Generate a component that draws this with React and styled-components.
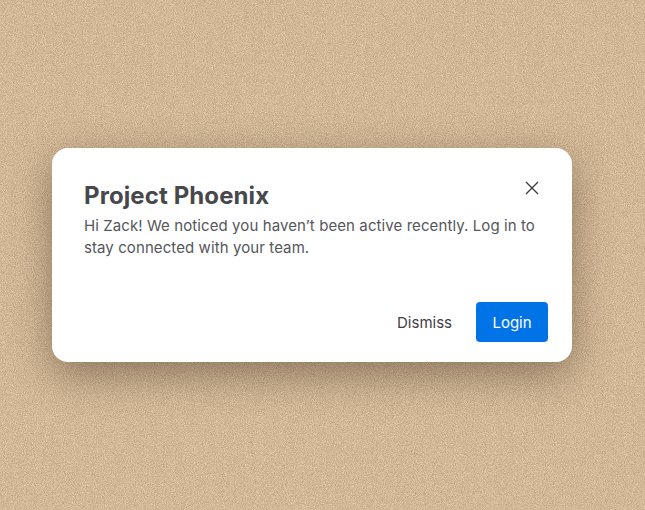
import { createGlobalStyle, styled } from "styled-components";

const noise = `url("data:image/svg+xml,%3Csvg xmlns='http://www.w3.org/2000/svg' width='645' height='510'%3E%3Cfilter id='n' x='0' y='0' width='100%25' height='100%25' color-interpolation-filters='sRGB'%3E%3CfeTurbulence type='fractalNoise' baseFrequency='1.1' numOctaves='2' seed='4'/%3E%3CfeColorMatrix values='0.28 0 0 0 0.683 0.28 0 0 0 0.581 0.28 0 0 0 0.452 0 0 0 0 1'/%3E%3C/filter%3E%3Crect width='645' height='510' filter='url(%23n)'/%3E%3C/svg%3E")`;

const GlobalStyle = createGlobalStyle`
    html, body {
        margin: 0;
        padding: 0;
    }
`;

const Page = styled.div`
    display: flex;
    align-items: center;
    box-sizing: border-box;
    width: 645px;
    height: 510px;
    padding-left: 52px;
    overflow: hidden;
    background-color: #d3b998;
    background-image: ${noise};
    font-family: "Inter", "Liberation Sans", sans-serif;
`;

const Modal = styled.div`
    display: flex;
    flex-direction: column;
    box-sizing: border-box;
    width: 520px;
    height: 214px;
    padding: 24px 24px 20px 32px;
    border-radius: 16px;
    background: #fff;
    box-shadow: 0 12px 40px rgba(50, 38, 20, 0.45);
`;

const Header = styled.div`
    display: flex;
    justify-content: space-between;
    align-items: flex-start;
`;

const Title = styled.h2`
    margin: 9px 0 0;
    font-size: 24px;
    line-height: 30px;
    font-weight: 700;
    letter-spacing: 0.1px;
    color: #47484c;
`;

const CloseButton = styled.button`
    display: flex;
    align-items: center;
    justify-content: center;
    width: 32px;
    height: 32px;
    padding: 0;
    border: 0;
    background: none;
    color: #3c3d40;
`;

const Message = styled.p`
    margin: 4px 0 0;
    font-size: 15px;
    line-height: 22px;
    letter-spacing: 0.09px;
    color: #55565a;
`;

const Actions = styled.div`
    display: flex;
    justify-content: flex-end;
    align-items: center;
    gap: 8px;
    margin-top: auto;
`;

const Button = styled.button`
    min-width: 72px;
    height: 40px;
    padding: 0 16px;
    border: 0;
    border-radius: 4px;
    font-family: inherit;
    font-size: 15px;
    color: ${(props) => (props.$primary ? "#fff" : "#3f4044")};
    background: ${(props) => (props.$primary ? "#0073e6" : "transparent")};
`;

export default function App() {
    return (
        <Page>
            <GlobalStyle />
            <Modal>
                <Header>
                    <Title>Project Phoenix</Title>
                    <CloseButton aria-label="Close">
                        <svg width="14" height="14" viewBox="0 0 14 14" fill="none" stroke="currentColor" strokeWidth="1.4">
                            <path d="M1 1 L13 13 M13 1 L1 13" />
                        </svg>
                    </CloseButton>
                </Header>
                <Message>
                    Hi Zack! We noticed you haven’t been active recently. Log in to stay connected with your team.
                </Message>
                <Actions>
                    <Button>Dismiss</Button>
                    <Button $primary>Login</Button>
                </Actions>
            </Modal>
        </Page>
    );
}
